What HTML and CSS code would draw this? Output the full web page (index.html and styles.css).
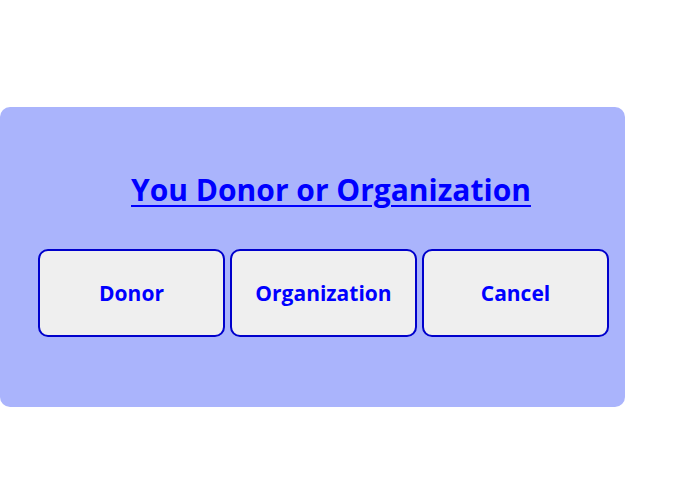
FILE: index.html
```html
<!DOCTYPE html>
<html>
<head>
<meta charset="utf-8">
<link rel="stylesheet" href="styles.css">
</head>
<body>
<div class="panel">
  <h1 class="title">You Donor or Organization</h1>
  <div class="buttons">
    <button class="btn">Donor</button>
    <button class="btn">Organization</button>
    <button class="btn">Cancel</button>
  </div>
</div>
</body>
</html>
```
FILE: styles.css
```css
html, body {
  margin: 0;
  padding: 0;
  background: #ffffff;
  font-family: "Open Sans", "Noto Sans", sans-serif;
}
.panel {
  box-sizing: border-box;
  margin-top: 107px;
  width: 625px;
  height: 300px;
  background: #aab4fc;
  border-radius: 10px;
  padding: 0 16px 0 38px;
}
.title {
  margin: 0;
  padding: 63px 0 0 15px;
  text-align: center;
  font-size: 30px;
  font-weight: 700;
  line-height: 40px;
  color: #0000ff;
  text-decoration: underline;
  text-decoration-thickness: 2px;
  text-underline-offset: 4px;
}
.buttons {
  display: flex;
  gap: 5px;
  margin-top: 39px;
}
.btn {
  box-sizing: border-box;
  flex: 0 0 187px;
  width: 187px;
  height: 88px;
  background: #efefef;
  border: 2px solid #0000cc;
  border-radius: 10px;
  font-family: "Open Sans", "Noto Sans", sans-serif;
  font-size: 21px;
  font-weight: 700;
  color: #0000ff;
  padding: 0;
}
```
